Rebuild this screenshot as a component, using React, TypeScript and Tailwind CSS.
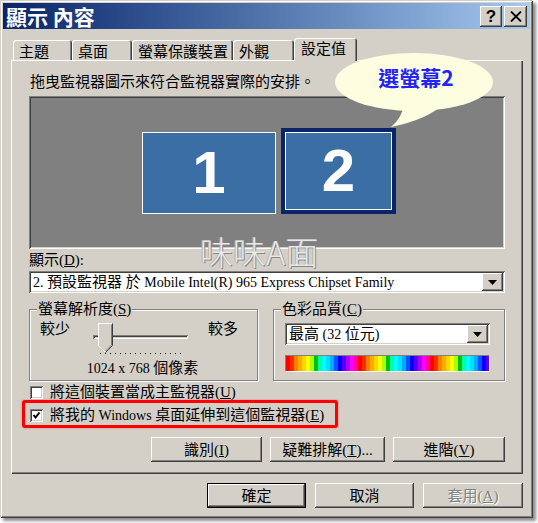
import React from 'react';

const RAISED =
  'shadow-[inset_-1px_-1px_#404040,inset_1px_1px_#ffffff,inset_-2px_-2px_#808080,inset_2px_2px_#d4d0c8]';
const SUNKEN =
  'shadow-[inset_1px_1px_#808080,inset_-1px_-1px_#ffffff,inset_2px_2px_#404040,inset_-2px_-2px_#d4d0c8]';

const SPECTRUM = [
  '#ff0000', '#ff2a00', '#ff7f00', '#ffaa00', '#ffd400', '#ffff00',
  '#aaff00', '#00c000', '#00ffaa', '#00ffff', '#00e0ff', '#00aaff',
  '#0055ff', '#0000ff', '#5500ff', '#aa00ff', '#ff00ff', '#ff00aa',
];

function Latin({ children }: { children: React.ReactNode }) {
  return <span className="text-[14px]">{children}</span>;
}

function Key({ k }: { k: string }) {
  return (
    <>
      (<u>{k}</u>)
    </>
  );
}

function DropArrow() {
  return (
    <div className={`w-[21px] h-[18px] bg-[#d4d0c8] ${RAISED} flex items-center justify-center`}>
      <svg width="9" height="5" viewBox="0 0 9 5">
        <polygon points="0,0 9,0 4.5,5" fill="#000" />
      </svg>
    </div>
  );
}

function Tab({ label, className }: { label: string; className: string }) {
  return (
    <div
      className={`${className} h-[21px] pl-[6px] pt-[4px] leading-[16px] rounded-t-[3px] shadow-[inset_1px_1px_#ffffff,inset_-1px_0_#404040,inset_-2px_0_#808080]`}
    >
      {label}
    </div>
  );
}

function Checkbox({ checked }: { checked?: boolean }) {
  return (
    <div className={`w-[13px] h-[13px] bg-white ${SUNKEN} flex items-center justify-center`}>
      {checked && (
        <svg width="9" height="9" viewBox="0 0 9 9">
          <polyline points="1.5,4 3.5,6.5 7.5,1.5" fill="none" stroke="#000" strokeWidth="2" />
        </svg>
      )}
    </div>
  );
}

export default function App() {
  return (
    <div className="w-[538px] h-[523px] bg-white font-['Liberation_Serif','Noto_Sans_CJK_TC',serif] text-[15px] text-black">
      <div className="relative w-[533px] h-[518px] p-[3px] flex flex-col bg-[#d4d0c8] shadow-[inset_1px_1px_#d4d0c8,inset_-1px_-1px_#404040,inset_2px_2px_#ffffff,inset_-2px_-2px_#808080,3px_3px_3px_rgba(0,0,0,0.45)]">
        {/* title bar */}
        <div className="h-[26px] flex items-center justify-between pl-[3px] pr-[3px] bg-linear-to-r from-[#0a246a] to-[#a6caf0]">
          <div className="text-white text-[21px] font-bold leading-[24px] font-['Noto_Sans_CJK_TC',sans-serif]">
            顯示 內容
          </div>
          <div className="flex gap-[2px]">
            <div className={`w-[22px] h-[21px] bg-[#d4d0c8] ${RAISED} flex items-center justify-center font-['Liberation_Sans',sans-serif] font-bold text-[17px] leading-none`}>
              ?
            </div>
            <div className={`w-[23px] h-[21px] bg-[#d4d0c8] ${RAISED} flex items-center justify-center`}>
              <svg width="12" height="11" viewBox="0 0 12 11">
                <path d="M1 0.5 L11 10.5 M11 0.5 L1 10.5" stroke="#000" strokeWidth="1.8" />
              </svg>
            </div>
          </div>
        </div>

        {/* tabs */}
        <div className="mt-[9px] h-[23px] pl-[10px] flex items-end">
          <Tab label="主題" className="w-[59px]" />
          <Tab label="桌面" className="w-[60px]" />
          <Tab label="螢幕保護裝置" className="w-[101px]" />
          <Tab label="外觀" className="w-[61px]" />
          <div className="relative z-10 w-[63px] h-[23px] pl-[7px] pt-[3px] leading-[16px] bg-[#d4d0c8] rounded-t-[3px] shadow-[inset_1px_1px_#ffffff,inset_-1px_0_#404040,inset_-2px_0_#808080]">
            設定值
          </div>
        </div>

        {/* tab page */}
        <div className="relative -mt-[1px] ml-[8px] w-[512px] h-[414px] px-[18px] flex flex-col shadow-[inset_1px_1px_#ffffff,inset_-1px_-1px_#404040,inset_-2px_-2px_#808080]">
          <div className="mt-[14px] h-[16px] leading-[16px] pl-[1px]">拖曳監視器圖示來符合監視器實際的安排。</div>

          {/* monitor arrangement */}
          <div className={`relative mt-[6px] w-[476px] h-[153px] bg-[#808080] ${SUNKEN}`}>
            <div className="absolute left-[113px] top-[36px] w-[134px] h-[82px] bg-[#3a6ea5] border border-white flex items-center justify-center">
              <span className="text-white font-['Liberation_Sans',sans-serif] font-bold text-[60px] leading-none">1</span>
            </div>
            <div className="absolute left-[252px] top-[32px] w-[115px] h-[86px] border-[4px] border-[#0a246a]">
              <div className="w-full h-full bg-[#3a6ea5] border border-white flex items-center justify-center">
                <span className="text-white font-['Liberation_Sans',sans-serif] font-bold text-[60px] leading-none">2</span>
              </div>
            </div>
          </div>

          <div className="mt-[3px] h-[16px] leading-[16px]">
            顯示<Key k="D" />:
          </div>
          <div className={`mt-[3px] h-[22px] w-[476px] bg-white ${SUNKEN} flex items-center justify-between pl-[4px] pr-[2px]`}>
            <div className="leading-[16px] whitespace-nowrap">
              <Latin>2. </Latin>預設監視器 於<Latin> Mobile Intel(R) 965 Express Chipset Family</Latin>
            </div>
            <DropArrow />
          </div>

          {/* group boxes */}
          <div className="mt-[10px] h-[78px] flex gap-[15px]">
            <div className="mt-[6px] w-[229px] h-[72px] border border-[#808080] shadow-[1px_1px_#ffffff,inset_1px_1px_#ffffff] flex flex-col">
              <div className="-mt-[9px] ml-[7px] px-[1px] w-fit bg-[#d4d0c8] leading-[16px]">
                螢幕解析度<Key k="S" />
              </div>
              <div className="mt-[4px] flex items-start">
                <div className="ml-[10px] leading-[16px]">較少</div>
                <div className="relative ml-[23px] w-[95px] h-[33px]">
                  <div className="absolute left-0 top-[14px] w-[95px] h-[4px] shadow-[inset_1px_1px_#808080,inset_-1px_-1px_#ffffff,inset_2px_2px_#404040]" />
                  <svg className="absolute left-[5px] top-[2px]" width="15" height="30" viewBox="0 0 15 30">
                    <path d="M0.5 0.5 H14.5 V22.5 L7.5 29.5 L0.5 22.5 Z" fill="#d4d0c8" />
                    <path d="M0.5 22.5 V0.5 H14" stroke="#ffffff" fill="none" />
                    <path d="M14.5 0.5 V22.5 L7.5 29.5" stroke="#404040" fill="none" />
                    <path d="M13.5 1.5 V22 L7.5 28" stroke="#808080" fill="none" />
                    <path d="M0.5 22.5 L7 29" stroke="#ffffff" fill="none" />
                  </svg>
                  <div className="absolute left-[7px] top-[32px] flex gap-[4px]">
                    {Array.from({ length: 17 }).map((_, i) => (
                      <div key={i} className="w-[1px] h-[1px] bg-black" />
                    ))}
                  </div>
                </div>
                <div className="ml-[20px] leading-[16px]">較多</div>
              </div>
              <div className="mt-[6px] leading-[16px] text-center pr-[2px]">
                <Latin>1024 x 768 </Latin>個像素
              </div>
            </div>

            <div className="mt-[6px] w-[232px] h-[72px] border border-[#808080] shadow-[1px_1px_#ffffff,inset_1px_1px_#ffffff] flex flex-col">
              <div className="-mt-[9px] ml-[7px] px-[1px] w-fit bg-[#d4d0c8] leading-[16px]">
                色彩品質<Key k="C" />
              </div>
              <div className={`mt-[6px] ml-[11px] w-[205px] h-[22px] bg-white ${SUNKEN} flex items-center justify-between pl-[4px] pr-[2px]`}>
                <div className="leading-[16px] whitespace-nowrap">
                  最高<Latin> (32 </Latin>位元<Latin>)</Latin>
                </div>
                <DropArrow />
              </div>
              <div className="mt-[10px] ml-[11px] w-[205px] h-[17px] flex overflow-hidden border-t border-l border-[#808080] border-b-white border-r-white border-b border-r">
                {[...SPECTRUM, ...SPECTRUM, ...SPECTRUM].map((c, i) => (
                  <div key={i} className="w-[4px] h-full shrink-0" style={{ backgroundColor: c }} />
                ))}
              </div>
            </div>
          </div>

          {/* checkboxes */}
          <div className="mt-[3px] h-[16px] flex items-center pl-[1px]">
            <Checkbox />
            <div className="ml-[7px] leading-[16px]">
              將這個裝置當成主監視器<Key k="U" />
            </div>
          </div>
          <div className="mt-[7px] h-[16px] flex items-center pl-[1px]">
            <Checkbox checked />
            <div className="ml-[7px] leading-[16px] whitespace-nowrap">
              將我的<Latin> Windows </Latin>桌面延伸到這個監視器<Key k="E" />
            </div>
          </div>

          {/* action buttons */}
          <div className="mt-[14px] h-[25px] flex justify-end gap-[8px]">
            <div className={`w-[111px] h-[25px] ${RAISED} flex items-center justify-center leading-[16px]`}>
              識別<Key k="I" />
            </div>
            <div className={`w-[115px] h-[25px] ${RAISED} flex items-center justify-center leading-[16px]`}>
              疑難排解<Key k="T" />...
            </div>
            <div className={`w-[112px] h-[25px] ${RAISED} flex items-center justify-center leading-[16px]`}>
              進階<Key k="V" />
            </div>
          </div>

          {/* red highlight */}
          <div className="absolute left-[11px] top-[340px] w-[316px] h-[28px] border-[3px] border-[#ff0000] rounded-[3px] shadow-[0_0_2px_rgba(255,0,0,0.5)] pointer-events-none" />
        </div>

        {/* dialog buttons */}
        <div className="mt-[9px] h-[25px] pr-[7px] flex justify-end gap-[9px]">
          <div className="w-[99px] h-[25px] border border-black">
            <div className={`w-full h-full ${RAISED} flex items-center justify-center leading-[16px]`}>確定</div>
          </div>
          <div className={`w-[99px] h-[25px] ${RAISED} flex items-center justify-center leading-[16px]`}>取消</div>
          <div className={`w-[100px] h-[25px] ${RAISED} flex items-center justify-center leading-[16px] text-[#808080] [text-shadow:1px_1px_0_#ffffff]`}>
            套用<Key k="A" />
          </div>
        </div>

        {/* speech bubble */}
        <div className="absolute left-[330px] top-[48px] w-[170px] h-[84px] pointer-events-none">
          <svg className="absolute inset-0" width="170" height="84" viewBox="0 0 170 84">
            <ellipse cx="84" cy="34" rx="79" ry="29" fill="#fdfde0" />
            <path d="M74 56 Q72 70 61 79 Q96 72 114 56 Z" fill="#fdfde0" />
          </svg>
          <div className="absolute left-0 top-[18px] w-full text-center pl-[2px] text-[21px] leading-[22px] font-bold text-[#2323f5] font-['Noto_Sans_CJK_TC',sans-serif]">
            選螢幕2
          </div>
        </div>

        {/* watermark */}
        <div className="absolute left-[200px] top-[235px] text-[33px] leading-[33px] font-light text-[#e8e8e8] [text-shadow:1px_1px_0_#888888,-1px_0_0_#b0b0b0] font-['Noto_Sans_CJK_TC',sans-serif] pointer-events-none whitespace-nowrap">
          味味A面
        </div>
      </div>
    </div>
  );
}
